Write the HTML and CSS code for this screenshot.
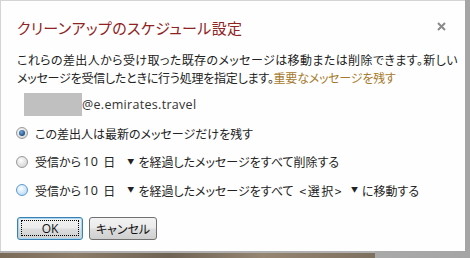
FILE: index.html
```html
<!DOCTYPE html>
<html lang="ja">
<head>
<meta charset="utf-8">
<link rel="stylesheet" href="styles.css">
</head>
<body>
<div class="screen">
  <div class="dialog">
    <div class="head">
      <h1 class="title">クリーンアップのスケジュール設定</h1>
      <span class="close"><svg width="9" height="9" viewBox="0 0 9 9"><path d="M1 1L8 8M8 1L1 8" stroke="#8a8a8a" stroke-width="2"/></svg></span>
    </div>
    <p class="desc"><span class="l1">これらの差出人から受け取った既存のメッセージは移動または削除できます。新しい</span><br><span class="l2">メッセージを受信したときに行う処理を指定します。<a class="link">重要なメッセージを残す</a></span></p>
    <div class="sender"><span class="redact"></span><span class="email">@e.emirates.travel</span></div>
    <div class="options">
      <div class="opt"><span class="radio checked"></span><span>この差出人は最新のメッセージだけを残す</span></div>
      <div class="opt"><span class="radio"></span><span>受信から</span><span class="num">10</span><span class="unit">日</span><span class="arrow">▼</span><span class="rest">を経過したメッセージをすべて削除する</span></div>
      <div class="opt"><span class="radio hover"></span><span>受信から</span><span class="num">10</span><span class="unit">日</span><span class="arrow">▼</span><span class="rest">を経過したメッセージをすべて</span><span class="choose">&lt;選択&gt;</span><span class="arrow a2">▼</span><span class="rest">に移動する</span></div>
    </div>
    <div class="buttons">
      <button class="btn default"><span class="focus">OK</span></button>
      <button class="btn">キャンセル</button>
    </div>
  </div>
  <div class="strip"></div>
</div>
</body>
</html>
```
FILE: styles.css
```css
html, body { margin: 0; padding: 0; }
body {
  width: 470px;
  height: 258px;
  background: #a7a7a7;
  overflow: hidden;
  font-family: "Noto Sans CJK JP", "Noto Sans", sans-serif;
  font-feature-settings: "palt";
  color: #222;
}
.screen {
  display: flex;
  flex-direction: column;
  width: 470px;
  height: 258px;
  background: linear-gradient(to right, #b9b9b9 0, #a5a5a5 100%);
}
.dialog {
  box-sizing: border-box;
  width: 465px;
  height: 251px;
  background: #fefefe;
  border-top: 1px solid #d4d4d4;
  border-left: 1px solid #d4d4d4;
  padding: 16px 0 0 16px;
  display: flex;
  flex-direction: column;
}
.strip {
  height: 7px;
  width: 375px;
  background: linear-gradient(to right, #7a6a58, #8c7c68 20%, #6f6354 45%, #958571 70%, #7e705f);
  border-top: 2px solid #b0b0b0;
  box-sizing: border-box;
}
.head {
  display: flex;
  align-items: center;
  justify-content: space-between;
  height: 21px;
  padding-right: 19px;
}
.title {
  margin: 0;
  font-size: 15px;
  font-weight: normal;
  line-height: 21px;
  color: #8f2323;
  letter-spacing: 0.35px;
}
.close { display: flex; margin-top: -3px; }
.desc {
  margin: 13px 0 0;
  font-size: 12px;
  line-height: 18px;
}
.l1 { letter-spacing: 0.4px; }
.l2 { letter-spacing: -0.22px; }
.link { color: #a67a2c; }
.sender {
  display: flex;
  align-items: center;
  margin: 6px 0 0 7px;
  height: 23px;
}
.redact {
  width: 58px;
  height: 23px;
  background: #c0c0c0;
}
.email {
  font-family: "Open Sans", "Noto Sans", sans-serif;
  font-size: 12.5px;
  letter-spacing: 0.3px;
  color: #333;
  margin-top: -1px;
}
.options {
  display: flex;
  flex-direction: column;
  margin-top: 3px;
}
.opt {
  display: flex;
  align-items: center;
  height: 28.5px;
  font-size: 12px;
  white-space: pre;
}
.radio {
  box-sizing: border-box;
  width: 12px;
  height: 12px;
  border-radius: 50%;
  margin: 0 7px 0 -1px;
  border: 1px solid #9a9a9a;
  background: radial-gradient(circle at 40% 35%, #ffffff 0, #e6e6e6 45%, #cfcfcf 100%);
  position: relative;
}
.radio.checked::after {
  content: "";
  position: absolute;
  left: 2px; top: 2px;
  width: 6px; height: 6px;
  border-radius: 50%;
  background: radial-gradient(circle at 40% 35%, #6fa7d8 0, #1f4f86 70%);
}
.radio.hover {
  border-color: #5c9bd1;
  background: radial-gradient(circle at 40% 35%, #ffffff 0, #d6ebfa 45%, #a9d1f1 100%);
}
.num {
  font-family: "Open Sans", "Noto Sans", sans-serif;
  font-size: 12.5px;
  letter-spacing: 0.5px;
  margin-left: 2px;
}
.unit { margin-left: 5px; }
.arrow { font-size: 7px; margin-left: 12px; position: relative; top: -1px; }
.a2 { margin-left: 8px; }
.rest { margin-left: 4px; }
.choose { margin-left: 6px; letter-spacing: 1.5px; }
.buttons {
  display: flex;
  gap: 6px;
  margin-top: 12px;
}
.btn {
  box-sizing: border-box;
  height: 23px;
  font-family: "Noto Sans CJK JP", "Noto Sans", sans-serif;
  font-feature-settings: "palt";
  font-size: 12px;
  color: #111;
  border: 1px solid #707070;
  border-radius: 3px;
  background: linear-gradient(to bottom, #f2f2f2 0, #ebebeb 48%, #dddddd 52%, #cfcfcf 100%);
  padding: 0;
  width: 68px;
  display: flex;
  align-items: center;
  justify-content: center;
}
.btn.default {
  width: 66px;
  border-color: #3c7fb1;
  box-shadow: inset 0 0 0 1px #a6d8f4;
}
.focus {
  box-sizing: border-box;
  width: 58px;
  height: 16px;
  border: 1px dotted #000;
  display: flex;
  align-items: center;
  justify-content: center;
  font-family: "Open Sans", "Noto Sans", sans-serif;
  font-size: 12px;
}
```
